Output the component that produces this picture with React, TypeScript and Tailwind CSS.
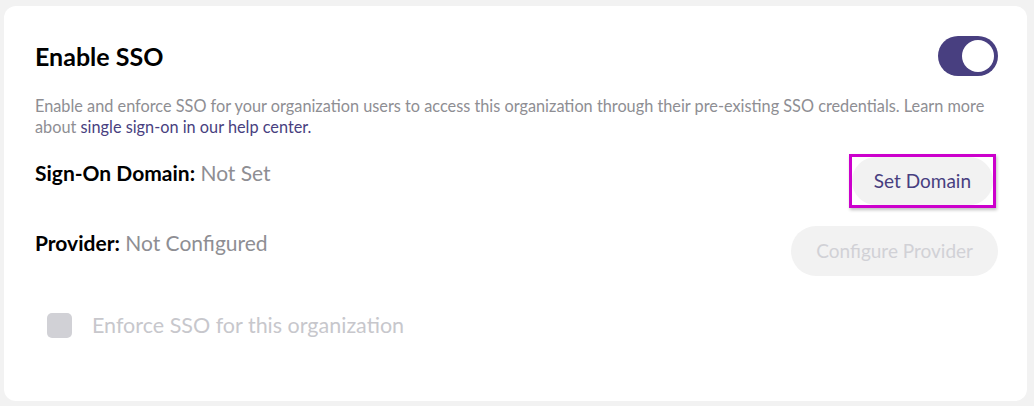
export default function App() {
  return (
    <div className="min-h-[406px] bg-[#f2f2f2] pl-[4px] pr-[7px] pt-[6px] pb-[6px]" style={{ fontFamily: "Lato, 'Open Sans', sans-serif" }}>
      <div className="rounded-[12px] bg-white pl-[31px] pr-[29px] pt-[30px] pb-[63px]">
        <div className="flex items-center justify-between">
          <h1 className="text-[25px] font-bold leading-[30px] text-black">Enable SSO</h1>
          <button className="flex h-[40px] w-[60px] items-center justify-end rounded-full bg-[#483f80] pr-[4px]">
            <span className="block h-[32px] w-[32px] rounded-full bg-white" />
          </button>
        </div>

        <p className="mt-[19px] text-[16.3px] leading-[21px] text-[#8e8e93]">
          Enable and enforce SSO for your organization users to access this organization through their pre-existing SSO credentials. Learn more about{" "}
          <a className="text-[#483f80]">single sign-on in our help center.</a>
        </p>

        <div className="mt-[17px] flex items-start justify-between">
          <p className="mt-[6px] text-[21px] leading-[26px] text-[#8e8e93]">
            <span className="font-bold text-black">Sign-On Domain:</span> Not Set
          </p>
          <div className="mr-[2px] border-[3px] border-[#cc00cc] shadow-[1px_2px_3px_rgba(0,0,0,0.25)]">
            <button className="h-[48px] rounded-full bg-[#f2f2f2] px-[22px] text-[19px] text-[#483f80]">Set Domain</button>
          </div>
        </div>

        <div className="mt-[18px] flex items-start justify-between">
          <p className="mt-[4px] text-[21px] leading-[26px] text-[#8e8e93]">
            <span className="font-bold text-black">Provider:</span> Not Configured
          </p>
          <button disabled className="h-[50px] rounded-full bg-[#f2f2f2] px-[25px] text-[19px] text-[#d1d1d6]">
            Configure Provider
          </button>
        </div>

        <label className="mt-[36px] flex items-center gap-[20px] pl-[12px]">
          <span className="block h-[25px] w-[25px] rounded-[5px] bg-[#d1d1d6]" />
          <span className="text-[21.5px] leading-[26px] text-[#c7c7cc]">Enforce SSO for this organization</span>
        </label>
      </div>
    </div>
  );
}
